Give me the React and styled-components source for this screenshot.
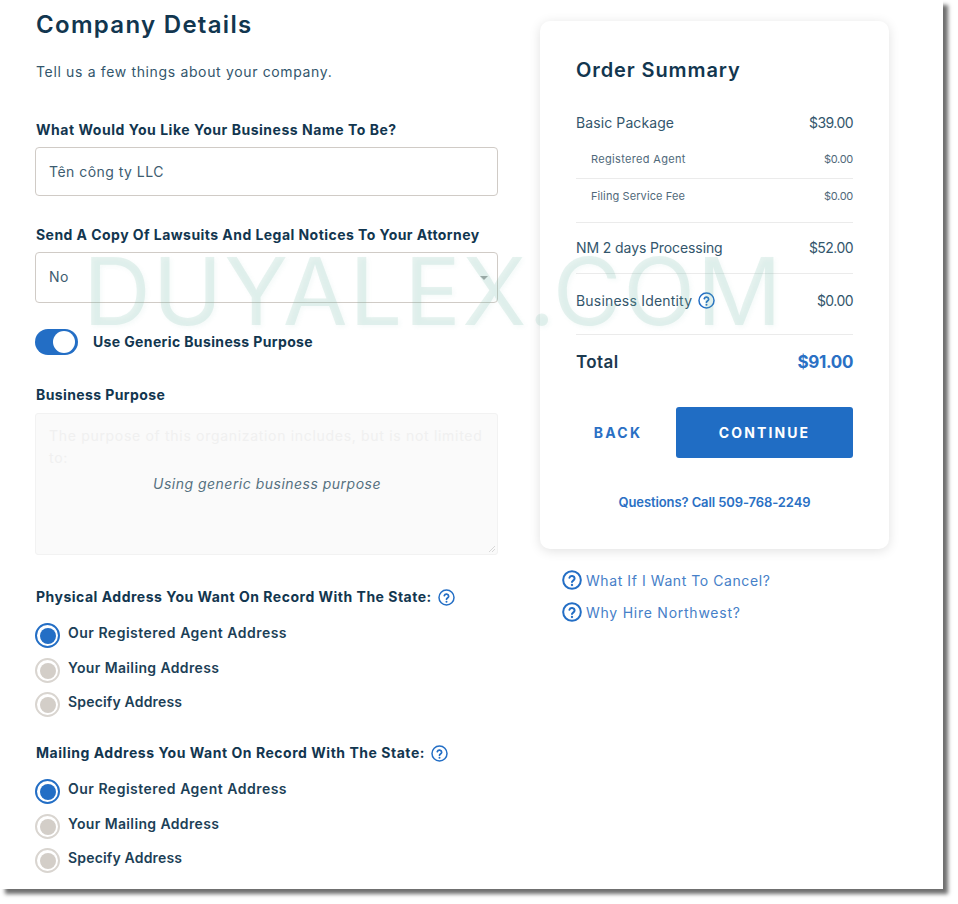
import React from "react";
import styled, { createGlobalStyle } from "styled-components";

const Global = createGlobalStyle`
  html, body { margin: 0; padding: 0; background: #fff; }
  body { width: 958px; height: 904px; overflow: hidden; font-family: "Inter", "Liberation Sans", sans-serif; color: #12364f; }
  * { box-sizing: border-box; }
`;

const Frame = styled.div`
  position: relative;
  width: 943px;
  height: 889px;
  background: #fff;
  padding-left: 35px;
  box-shadow: 5px 5px 4px #6f6f6f;
  display: grid;
  grid-template-columns: 463px 349px;
  column-gap: 42px;
  align-items: start;
`;

const Watermark = styled.div`
  position: absolute;
  left: 83px;
  top: 235px;
  font-size: 94px;
  line-height: 112px;
  font-weight: 400;
  letter-spacing: 1.7px;
  color: rgba(110, 185, 165, 0.17);
  text-shadow: 2px 2px 4px rgba(110, 185, 165, 0.07);
  white-space: nowrap;
  pointer-events: none;
`;

const LeftCol = styled.div`
  display: flex;
  flex-direction: column;
`;

const Title = styled.h1`
  margin: 10px 0 0 1px;
  font-size: 24px;
  line-height: 30px;
  font-weight: 600;
  letter-spacing: 1.3px;
  color: #12364f;
`;

const Subtitle = styled.p`
  margin: 22px 0 0 1px;
  font-size: 14px;
  line-height: 20px;
  font-weight: 400;
  letter-spacing: 0.65px;
  color: #33566c;
`;

const Label = styled.div`
  margin-top: ${(p) => p.$top}px;
  margin-left: 1px;
  font-size: 14px;
  line-height: 20px;
  font-weight: 700;
  letter-spacing: ${(p) => p.$ls}px;
  color: #12364f;
  display: flex;
  align-items: center;
  gap: 6px;
`;

const Field = styled.div`
  margin-top: ${(p) => p.$top}px;
  height: ${(p) => p.$h}px;
  position: relative;
  border: 1px solid #d0cbc6;
  border-radius: 4px;
  background: transparent;
  padding: 0 0 ${(p) => p.$pb || 0}px 13px;
  display: flex;
  align-items: center;
  font-size: 14px;
  letter-spacing: 0.47px;
  color: #3d5c70;
`;

const Caret = styled.span`
  position: absolute;
  right: 9px;
  top: 23px;
  width: 0;
  height: 0;
  border-left: 4px solid transparent;
  border-right: 4px solid transparent;
  border-top: 4px solid #a5a5a5;
`;

const ToggleRow = styled.div`
  margin-top: 26px;
  height: 26px;
  display: flex;
  align-items: center;
  gap: 15px;
`;

const Track = styled.div`
  width: 43px;
  height: 26px;
  border-radius: 13px;
  background: #236ec5;
  padding: 2px 3px 2px 0;
  display: flex;
  justify-content: flex-end;
`;

const Knob = styled.div`
  width: 22px;
  height: 22px;
  border-radius: 50%;
  background: #fff;
`;

const ToggleText = styled.span`
  font-size: 14px;
  font-weight: 700;
  letter-spacing: 0.37px;
  margin-top: -2px;
  color: #12364f;
`;

const TextArea = styled.div`
  margin-top: 8px;
  height: 142px;
  position: relative;
  background: #fafafa;
  border: 1px solid #f2f2f2;
  border-radius: 3px;
  padding: 11px 13px 0;
`;

const Placeholder = styled.div`
  font-size: 14px;
  line-height: 22px;
  letter-spacing: 0.69px;
  color: #f0f0f0;
`;

const Overlay = styled.div`
  margin-top: 5px;
  padding-left: 1px;
  text-align: center;
  font-size: 14px;
  line-height: 20px;
  font-style: italic;
  letter-spacing: 0.49px;
  color: #55707f;
`;

const Grip = styled.svg`
  position: absolute;
  right: 1px;
  bottom: 1px;
`;

const RadioGroup = styled.div`
  margin-top: 16px;
  display: flex;
  flex-direction: column;
`;

const RadioRow = styled.div`
  height: 25px;
  margin-bottom: ${(p) => p.$gap}px;
  display: flex;
  align-items: flex-start;
  gap: 8px;
`;

const RadioOuter = styled.div`
  width: 25px;
  height: 25px;
  flex: none;
  border-radius: 50%;
  border: 2px solid ${(p) => (p.$on ? "#236ec5" : "#d9d5d0")};
  display: flex;
  align-items: center;
  justify-content: center;
`;

const RadioInner = styled.div`
  width: 16px;
  height: 16px;
  border-radius: 50%;
  background: ${(p) => (p.$on ? "#236ec5" : "#d3cec8")};
`;

const RadioText = styled.span`
  font-size: 14px;
  line-height: 20px;
  font-weight: 600;
  letter-spacing: ${(p) => p.$ls}px;
  color: #1c3f57;
`;

const RightCol = styled.div`
  margin-top: 21px;
`;

const Card = styled.section`
  width: 349px;
  height: 528px;
  background: #fff;
  border-radius: 10px;
  box-shadow: 0 2px 12px rgba(0, 0, 0, 0.12);
  padding: 36px 36px 0;
`;

const CardTitle = styled.h2`
  margin: 0;
  font-size: 20px;
  line-height: 26px;
  font-weight: 600;
  letter-spacing: 0.9px;
  color: #12364f;
`;

const Row = styled.div`
  margin-top: ${(p) => p.$top || 0}px;
  height: ${(p) => p.$h}px;
  padding-bottom: ${(p) => p.$pb || 0}px;
  padding-left: ${(p) => (p.$sub ? 15 : 0)}px;
  display: flex;
  align-items: center;
  justify-content: space-between;
  font-size: ${(p) => (p.$sub ? 11 : 14)}px;
  letter-spacing: ${(p) => p.$ls || 0}px;
  color: ${(p) => (p.$sub ? "#50697a" : "#33566c")};
  border-bottom: ${(p) => (p.$line ? "1px solid #ebebeb" : "none")};
`;

const Amount = styled.span`
  letter-spacing: ${(p) => (p.$sub ? -0.3 : -0.55)}px;
`;

const RowName = styled.span`
  display: flex;
  align-items: center;
  gap: 6px;
`;

const TotalRow = styled.div`
  height: 53px;
  display: flex;
  align-items: center;
  justify-content: space-between;
  font-size: 17px;
  font-weight: 600;
  letter-spacing: 0.4px;
  color: #1c3a4f;
`;

const TotalValue = styled.span`
  color: #2a70c4;
  font-weight: 700;
  letter-spacing: -0.35px;
`;

const Buttons = styled.div`
  margin-top: 19px;
  display: flex;
  justify-content: space-between;
  align-items: center;
`;

const BackButton = styled.button`
  width: 84px;
  height: 51px;
  padding: 0;
  border: 0;
  background: transparent;
  font-family: inherit;
  font-size: 14px;
  font-weight: 700;
  letter-spacing: 2.2px;
  color: #2a70c4;
`;

const ContinueButton = styled.button`
  width: 177px;
  height: 51px;
  padding: 0;
  border: 0;
  border-radius: 3px;
  background: #206dc4;
  font-family: inherit;
  font-size: 14px;
  font-weight: 700;
  letter-spacing: 2.1px;
  color: #fff;
`;

const Questions = styled.div`
  margin-top: 34px;
  text-align: center;
  font-size: 13px;
  line-height: 20px;
  font-weight: 600;
  letter-spacing: -0.1px;
  color: #2a70c4;
`;

const Links = styled.div`
  margin: 21px 0 0 22px;
  display: flex;
  flex-direction: column;
  gap: 12px;
`;

const HelpLink = styled.div`
  height: 20px;
  display: flex;
  align-items: center;
  gap: 4px;
  font-size: 14px;
  letter-spacing: ${(p) => p.$ls}px;
  color: #4680c8;
`;

function Help({ size = 17, weight = 2.1 }) {
  return (
    <svg width={size} height={size} viewBox="0 0 24 24" fill="none" stroke="#236ec5" strokeWidth={weight} strokeLinecap="round" strokeLinejoin="round" style={{ flex: "none" }}>
      <circle cx="12" cy="12" r="10.6" />
      <path d="M8.9 9.3a3.2 3.2 0 0 1 6.2 1c0 2.1-3.1 2.7-3.1 4.2" strokeWidth="2.4" />
      <path d="M12 18h.01" strokeWidth="2.8" />
    </svg>
  );
}

const radioItems = [
  { text: "Our Registered Agent Address", gap: 10, ls: 0.5 },
  { text: "Your Mailing Address", gap: 9, ls: 0.37 },
  { text: "Specify Address", gap: 0, ls: 0.18 },
];

function Radios() {
  return (
    <RadioGroup>
      {radioItems.map((r, i) => (
        <RadioRow key={r.text} $gap={r.gap}>
          <RadioOuter $on={i === 0}>
            <RadioInner $on={i === 0} />
          </RadioOuter>
          <RadioText $ls={r.ls}>{r.text}</RadioText>
        </RadioRow>
      ))}
    </RadioGroup>
  );
}

export default function App() {
  return (
    <>
      <Global />
      <Frame>
        <LeftCol>
          <Title>Company Details</Title>
          <Subtitle>Tell us a few things about your company.</Subtitle>
          <Label $top={38} $ls={0.53}>What Would You Like Your Business Name To Be?</Label>
          <Field $top={7} $h={49}>Tên công ty LLC</Field>
          <Label $top={29} $ls={0.45}>Send A Copy Of Lawsuits And Legal Notices To Your Attorney</Label>
          <Field $top={7} $h={51} $pb={2}>
            No
            <Caret />
          </Field>
          <ToggleRow>
            <Track>
              <Knob />
            </Track>
            <ToggleText>Use Generic Business Purpose</ToggleText>
          </ToggleRow>
          <Label $top={30} $ls={0.4}>Business Purpose</Label>
          <TextArea>
            <Placeholder>The purpose of this organization includes, but is not limited to:</Placeholder>
            <Overlay>Using generic business purpose</Overlay>
            <Grip width="9" height="9" viewBox="0 0 9 9" stroke="#d8d8d8" fill="none">
              <path d="M8 2 2 8M8 5 5 8" />
            </Grip>
          </TextArea>
          <Label $top={32} $ls={0.5}>
            Physical Address You Want On Record With The State:
            <Help />
          </Label>
          <Radios />
          <Label $top={26} $ls={0.53}>
            Mailing Address You Want On Record With The State:
            <Help />
          </Label>
          <Radios />
        </LeftCol>
        <RightCol>
          <Card>
            <CardTitle>Order Summary</CardTitle>
            <Row $top={22} $h={36} $pb={1} $ls={0.1}>
              <span>Basic Package</span>
              <Amount>$39.00</Amount>
            </Row>
            <Row $sub $line $h={38} $pb={2} $ls={0.33}>
              <span>Registered Agent</span>
              <Amount $sub>$0.00</Amount>
            </Row>
            <Row $sub $line $h={44} $pb={10} $ls={0.1}>
              <span>Filing Service Fee</span>
              <Amount $sub>$0.00</Amount>
            </Row>
            <Row $line $h={51} $pb={2} $ls={-0.1}>
              <span>NM 2 days Processing</span>
              <Amount>$52.00</Amount>
            </Row>
            <Row $line $h={61} $pb={8} $ls={0.2}>
              <RowName>
                Business Identity
                <Help />
              </RowName>
              <Amount>$0.00</Amount>
            </Row>
            <TotalRow>
              <span>Total</span>
              <TotalValue>$91.00</TotalValue>
            </TotalRow>
            <Buttons>
              <BackButton>BACK</BackButton>
              <ContinueButton>CONTINUE</ContinueButton>
            </Buttons>
            <Questions>Questions? Call 509-768-2249</Questions>
          </Card>
          <Links>
            <HelpLink $ls={0.57}>
              <Help size={20} weight={2.4} />
              What If I Want To Cancel?
            </HelpLink>
            <HelpLink $ls={0.75}>
              <Help size={20} weight={2.4} />
              Why Hire Northwest?
            </HelpLink>
          </Links>
        </RightCol>
        <Watermark>DUYALEX.COM</Watermark>
      </Frame>
    </>
  );
}
